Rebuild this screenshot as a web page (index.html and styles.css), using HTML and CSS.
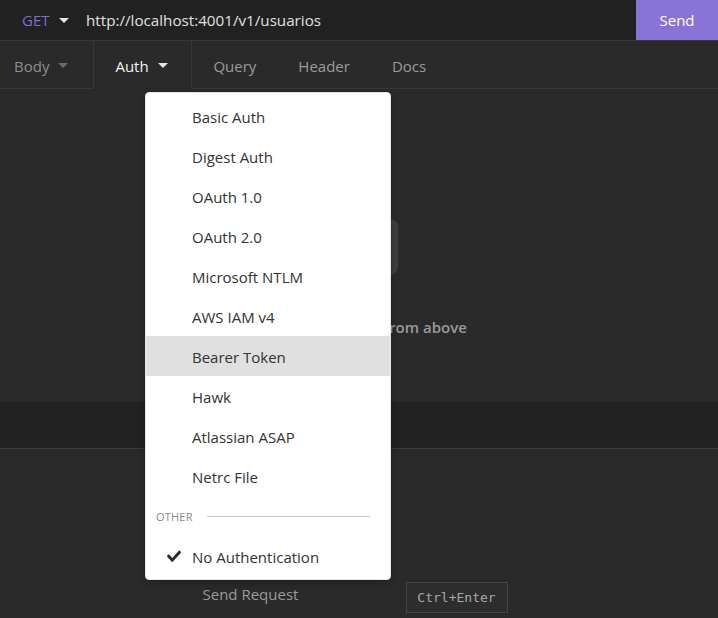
FILE: index.html
```html
<!DOCTYPE html>
<html>
<head>
<meta charset="utf-8">
<link rel="stylesheet" href="styles.css">
</head>
<body>
<div class="app">
  <div class="urlbar">
    <div class="method">GET <span class="caret caret-light"></span></div>
    <div class="url">http://localhost:4001/v1/usuarios</div>
    <div class="send">Send</div>
  </div>
  <div class="tabs">
    <div class="tab tab-first">Body <span class="caret caret-dim"></span></div>
    <div class="tab tab-active">Auth <span class="caret caret-light"></span></div>
    <div class="tab tab-plain">Query</div>
    <div class="tab tab-plain">Header</div>
    <div class="tab tab-plain">Docs</div>
    <div class="tab-fill"></div>
  </div>
  <div class="content">
    <div class="empty-icon"></div>
    <div class="empty-text">Select an auth type from above</div>
  </div>
  <div class="resp-header"></div>
  <div class="resp-body">
    <div class="shortcut">
      <span class="shortcut-label">Send Request</span>
      <span class="kbd">Ctrl+Enter</span>
    </div>
  </div>

  <div class="dropdown">
    <div class="item">Basic Auth</div>
    <div class="item">Digest Auth</div>
    <div class="item">OAuth 1.0</div>
    <div class="item">OAuth 2.0</div>
    <div class="item">Microsoft NTLM</div>
    <div class="item">AWS IAM v4</div>
    <div class="item item-hover">Bearer Token</div>
    <div class="item">Hawk</div>
    <div class="item">Atlassian ASAP</div>
    <div class="item">Netrc File</div>
    <div class="divider"><span class="divider-label">OTHER</span><span class="divider-line"></span></div>
    <div class="item item-checked">
      <svg class="check" viewBox="0 0 512 400" width="14" height="12" preserveAspectRatio="none"><path d="M173.9 392.4L7.5 226c-10-10-10-26.2 0-36.2l36.2-36.2c10-10 26.2-10 36.2 0L192 265.7 432.1 25.6c10-10 26.2-10 36.2 0l36.2 36.2c10 10 10 26.2 0 36.2L210.1 392.4c-10 10-26.2 10-36.2 0z" fill="#2b2b2b"/></svg>
      No Authentication
    </div>
  </div>
</div>
</body>
</html>
```

FILE: styles.css
```css
* { box-sizing: border-box; }
html, body { margin: 0; padding: 0; }
body {
  background: #2a2a2a;
  font-family: "Open Sans", "Noto Sans", sans-serif;
  font-size: 15px;
  color: #ddd;
}
.app {
  position: relative;
  width: 718px;
  height: 618px;
  display: flex;
  flex-direction: column;
  overflow: hidden;
}
.urlbar {
  height: 41px;
  background: #212121;
  border-bottom: 1px solid #383838;
  display: flex;
  align-items: center;
}
.method {
  color: #7f6cd3;
  padding-left: 22px;
  width: 86px;
  display: flex;
  align-items: center;
  height: 100%;
}
.caret {
  display: inline-block;
  width: 0;
  height: 0;
  border-left: 5px solid transparent;
  border-right: 5px solid transparent;
  border-top: 5px solid #ddd;
  margin-left: 9px;
}
.caret-light { border-top-color: #e6e6e6; }
.caret-dim { border-top-color: #6a6a6a; }
.url {
  flex: 1;
  color: #e0e0e0;
  font-size: 15.2px;
}
.send {
  width: 82px;
  height: 40px;
  background: #8874d7;
  color: #fff;
  display: flex;
  align-items: center;
  justify-content: center;
  align-self: flex-start;
}
.tabs {
  height: 48px;
  display: flex;
  background: #2a2a2a;
}
.tab {
  display: flex;
  align-items: center;
  padding: 2px 21px 0;
  color: #9a9a9a;
  border-bottom: 1px solid #383838;
}
.tab-first {
  padding-left: 14px;
  padding-right: 25px;
  color: #8e8e8e;
}
.tab-active {
  color: #f2f2f2;
  padding-right: 25px;
  border-left: 1px solid #383838;
  border-right: 1px solid #383838;
  border-bottom-color: transparent;
  width: 99px;
}
.tab-fill {
  flex: 1;
  border-bottom: 1px solid #383838;
}
.content {
  height: 313px;
  display: flex;
  flex-direction: column;
  align-items: center;
  padding-top: 130px;
}
.empty-icon {
  width: 78px;
  height: 56px;
  border-radius: 8px;
  background: #3f3f3f;
}
.empty-text {
  margin-top: 42px;
  margin-right: 10px;
  color: #9a9a9a;
  font-weight: 600;
}
.resp-header {
  height: 47px;
  background: #222;
  border-bottom: 1px solid #3c3c3c;
}
.resp-body {
  flex: 1;
  padding-top: 133px;
  display: flex;
  justify-content: center;
}
.shortcut {
  width: 305px;
  height: 31px;
  display: flex;
  align-items: center;
  justify-content: space-between;
  margin-right: 8px;
}
.shortcut-label {
  color: #9a9a9a;
  padding-bottom: 8px;
}
.kbd {
  width: 102px;
  height: 31px;
  border: 1px solid #444;
  background: #2d2d2d;
  color: #a8a8a8;
  font-family: "DejaVu Sans Mono", "Liberation Mono", monospace;
  font-size: 13px;
  display: flex;
  align-items: center;
  justify-content: center;
}
.dropdown {
  position: absolute;
  left: 145px;
  top: 92px;
  width: 246px;
  height: 488px;
  background: #fff;
  border: 1px solid #e4e4e4;
  border-radius: 4px;
  padding: 3px 0;
  box-shadow: 0 2px 8px rgba(0,0,0,0.3);
  color: #333;
}
.item {
  height: 40px;
  display: flex;
  align-items: center;
  padding: 2px 0 0 46px;
  position: relative;
}
.item-hover { background: #e0e0e0; }
.check {
  position: absolute;
  left: 21px;
  top: 14px;
}
.divider {
  height: 40px;
  display: flex;
  align-items: center;
  padding: 0 20px 0 10px;
}
.divider-label {
  font-size: 11px;
  color: #888;
  letter-spacing: 0.2px;
}
.divider-line {
  flex: 1;
  height: 1px;
  background: #c8c8c8;
  margin-left: 14px;
}
```
